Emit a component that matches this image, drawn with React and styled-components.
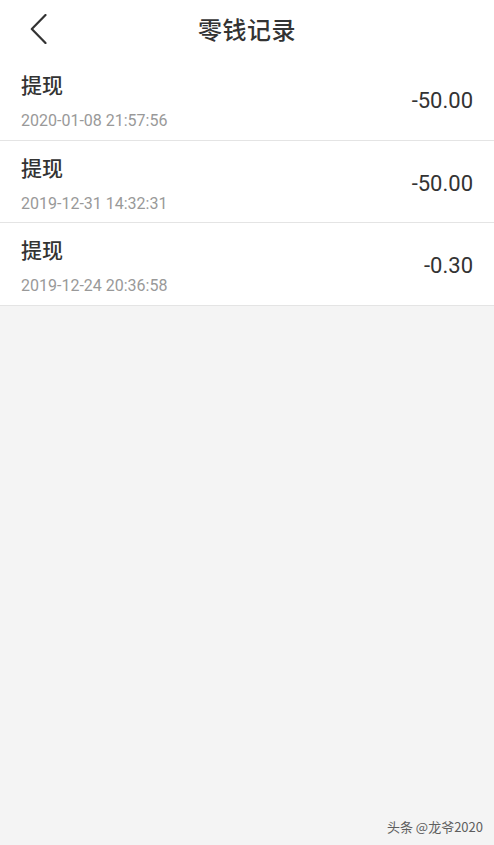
import React from "react";
import styled, { createGlobalStyle } from "styled-components";

const GlobalStyle = createGlobalStyle`
  html, body {
    margin: 0;
    padding: 0;
    background: #f4f4f4;
  }
  body {
    font-family: Roboto, "Noto Sans CJK SC", sans-serif;
    -webkit-font-smoothing: antialiased;
  }
`;

const Page = styled.div`
  position: relative;
  min-height: 845px;
  background: #f4f4f4;
`;

const Header = styled.header`
  display: grid;
  grid-template-columns: 1fr auto 1fr;
  align-items: center;
  height: 58px;
  background: #fff;
`;

const BackButton = styled.button`
  justify-self: start;
  display: flex;
  align-items: center;
  padding: 0 0 0 30px;
  border: none;
  background: transparent;
  height: 58px;
  cursor: pointer;
`;

const Title = styled.h1`
  margin: 0;
  font-size: 24px;
  font-weight: 500;
  color: #333;
  font-family: "Noto Sans CJK SC", sans-serif;
  line-height: 30px;
  letter-spacing: 0.5px;
`;

const List = styled.ul`
  list-style: none;
  margin: 0;
  padding: 0;
  background: #fff;
`;

const Row = styled.li`
  display: flex;
  align-items: center;
  justify-content: space-between;
  height: 81.5px;
  padding: 0 21px;
  border-bottom: 1px solid #e4e4e4;
  box-sizing: content-box;
`;

const Info = styled.div`
  display: flex;
  flex-direction: column;
  align-self: flex-start;
  padding-top: 12px;
  gap: 12px;
`;

const Kind = styled.div`
  font-family: "Noto Sans CJK SC", sans-serif;
  font-size: 21px;
  font-weight: 500;
  line-height: 28px;
  color: #333;
`;

const Time = styled.div`
  font-family: Roboto, sans-serif;
  font-size: 16px;
  line-height: 22px;
  color: #999;
`;

const Amount = styled.div`
  font-family: Roboto, sans-serif;
  font-size: 22px;
  color: #333;
  padding-top: 4px;
`;

const Watermark = styled.div`
  position: absolute;
  right: 11px;
  bottom: 9px;
  font-family: "Noto Sans CJK SC", sans-serif;
  font-size: 13px;
  color: #444;
  opacity: 0.85;
`;

const records = [
  { kind: "提现", time: "2020-01-08 21:57:56", amount: "-50.00" },
  { kind: "提现", time: "2019-12-31 14:32:31", amount: "-50.00" },
  { kind: "提现", time: "2019-12-24 20:36:58", amount: "-0.30" },
];

export default function App() {
  return (
    <>
      <GlobalStyle />
      <Page>
        <Header>
          <BackButton aria-label="返回">
            <svg width="17" height="30" viewBox="0 0 17 30" fill="none">
              <path
                d="M15.5 1 L1.8 15 L15.5 29"
                stroke="#333"
                strokeWidth="2.2"
                strokeLinecap="round"
                strokeLinejoin="round"
              />
            </svg>
          </BackButton>
          <Title>零钱记录</Title>
          <div />
        </Header>
        <List>
          {records.map((r, i) => (
            <Row key={i}>
              <Info>
                <Kind>{r.kind}</Kind>
                <Time>{r.time}</Time>
              </Info>
              <Amount>{r.amount}</Amount>
            </Row>
          ))}
        </List>
        <Watermark>头条 @龙爷2020</Watermark>
      </Page>
    </>
  );
}
